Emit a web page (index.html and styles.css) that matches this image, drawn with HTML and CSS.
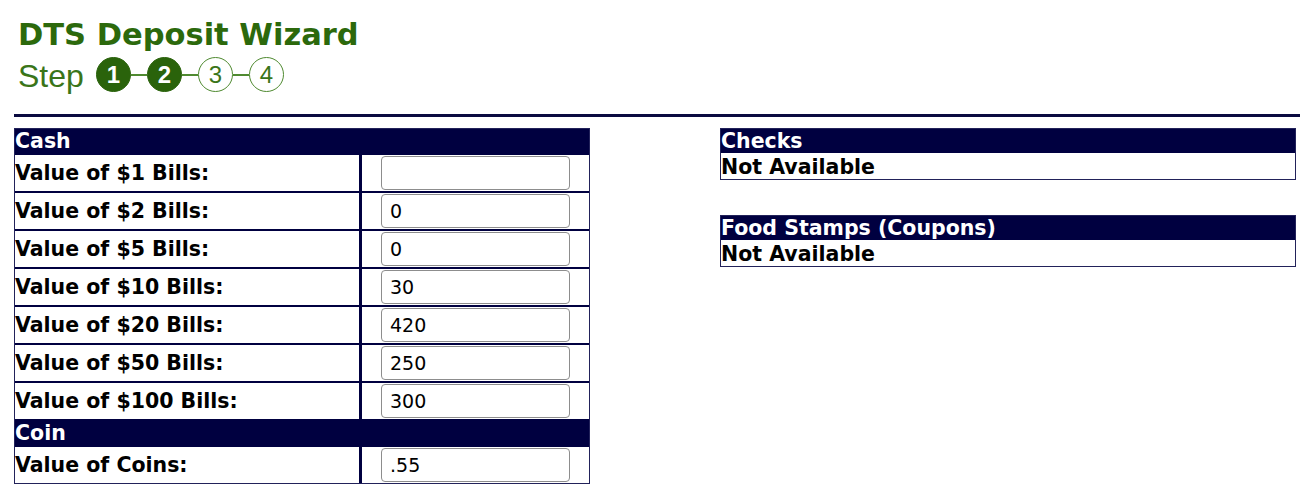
FILE: index.html
```html
<!DOCTYPE html>
<html lang="en">
<head>
    <meta charset="UTF-8">
    <meta name="viewport" content="width=device-width, initial-scale=1.0">
    <title>DTS Deposit Wizard</title>
    <link rel="stylesheet" href="styles.css">
</head>
<body>
    <div class="page">
        <!-- Heading and step indicator -->
        <h1 class="wizard-title">DTS Deposit Wizard</h1>
        <div class="steps">
            <span class="steps-label">Step</span>
            <span class="dot done">1</span>
            <span class="link"></span>
            <span class="dot done">2</span>
            <span class="link"></span>
            <span class="dot">3</span>
            <span class="link"></span>
            <span class="dot">4</span>
        </div>

        <hr class="rule">

        <div class="columns">
            <!-- Cash and coin -->
            <table class="tender grid">
                <tr><th colspan="2">Cash</th></tr>
                <tr>
                    <td class="label">Value of $1 Bills:</td>
                    <td class="field"><input type="text" name="bills1" value=""></td>
                </tr>
                <tr>
                    <td class="label">Value of $2 Bills:</td>
                    <td class="field"><input type="text" name="bills2" value="0"></td>
                </tr>
                <tr>
                    <td class="label">Value of $5 Bills:</td>
                    <td class="field"><input type="text" name="bills5" value="0"></td>
                </tr>
                <tr>
                    <td class="label">Value of $10 Bills:</td>
                    <td class="field"><input type="text" name="bills10" value="30"></td>
                </tr>
                <tr>
                    <td class="label">Value of $20 Bills:</td>
                    <td class="field"><input type="text" name="bills20" value="420"></td>
                </tr>
                <tr>
                    <td class="label">Value of $50 Bills:</td>
                    <td class="field"><input type="text" name="bills50" value="250"></td>
                </tr>
                <tr>
                    <td class="label">Value of $100 Bills:</td>
                    <td class="field"><input type="text" name="bills100" value="300"></td>
                </tr>
                <tr><th colspan="2">Coin</th></tr>
                <tr>
                    <td class="label">Value of Coins:</td>
                    <td class="field"><input type="text" name="coins" value=".55"></td>
                </tr>
            </table>

            <!-- Other tender types -->
            <div class="side">
                <table class="tender">
                    <tr><th>Checks</th></tr>
                    <tr><td class="note">Not Available</td></tr>
                </table>
                <table class="tender">
                    <tr><th>Food Stamps (Coupons)</th></tr>
                    <tr><td class="note">Not Available</td></tr>
                </table>
            </div>
        </div>
    </div>
</body>
</html>
```

FILE: styles.css
```css
/* General Styles */
body {
    margin: 0;
    font-family: Verdana, "DejaVu Sans", sans-serif;
    color: #000;
    background: #fff;
}

.page {
    padding-left: 14px;
}

/* Heading */
.wizard-title {
    margin: 0;
    padding: 17px 0 0 4px;
    font-size: 30.5px;
    font-weight: bold;
    color: #2c690c;
}

/* Step indicator */
.steps {
    display: flex;
    align-items: center;
    margin-top: 5px;
    padding-left: 4px;
    height: 35px;
}

.steps-label {
    font-family: "Liberation Sans", Arial, sans-serif;
    font-size: 32px;
    line-height: 35px;
    padding-top: 3px;
    margin-right: 12px;
    color: #3a7519;
}

.dot {
    width: 35px;
    height: 35px;
    box-sizing: border-box;
    border-radius: 50%;
    border: 1.5px solid #4f8a30;
    display: flex;
    align-items: center;
    justify-content: center;
    font-family: "Liberation Sans", Arial, sans-serif;
    font-size: 24px;
    color: #3a7519;
    background: #fff;
}

.dot.done {
    background: #2a630b;
    border-color: #2a630b;
    color: #fff;
    font-weight: bold;
}

.link {
    width: 16px;
    height: 2px;
    background: #4f8a30;
}

.rule {
    border: 0;
    height: 3px;
    background: #0a0a40;
    margin: 22px 0 11px 0;
}

/* Tender tables */
.columns {
    display: flex;
    align-items: flex-start;
    gap: 130px;
}

.side {
    display: flex;
    flex-direction: column;
    gap: 35px;
}

.tender {
    width: 576px;
    border-collapse: separate;
    border-spacing: 0;
    border: 1px solid #22225a;
    font-size: 20.5px;
    font-weight: bold;
}

.tender th {
    background: #000040;
    color: #fff;
    text-align: left;
    padding: 1px 0 0 0;
    line-height: 23px;
}

.grid tr + tr > * {
    border-top: 2px solid #000040;
}

.tender td {
    padding: 0;
}

.tender .label {
    border-right: 3px solid #000040;
    white-space: nowrap;
}

.tender .field {
    width: 227px;
    text-align: center;
}

.tender .note {
    padding-top: 2px;
    line-height: 24px;
}

.field input {
    display: block;
    box-sizing: border-box;
    width: 189px;
    height: 34px;
    margin: 1px auto;
    padding: 0 8px;
    border: 1px solid #8d8d8d;
    border-radius: 4px;
    font-family: Verdana, "DejaVu Sans", sans-serif;
    font-size: 19px;
    color: #000;
    background: #fff;
}
```
